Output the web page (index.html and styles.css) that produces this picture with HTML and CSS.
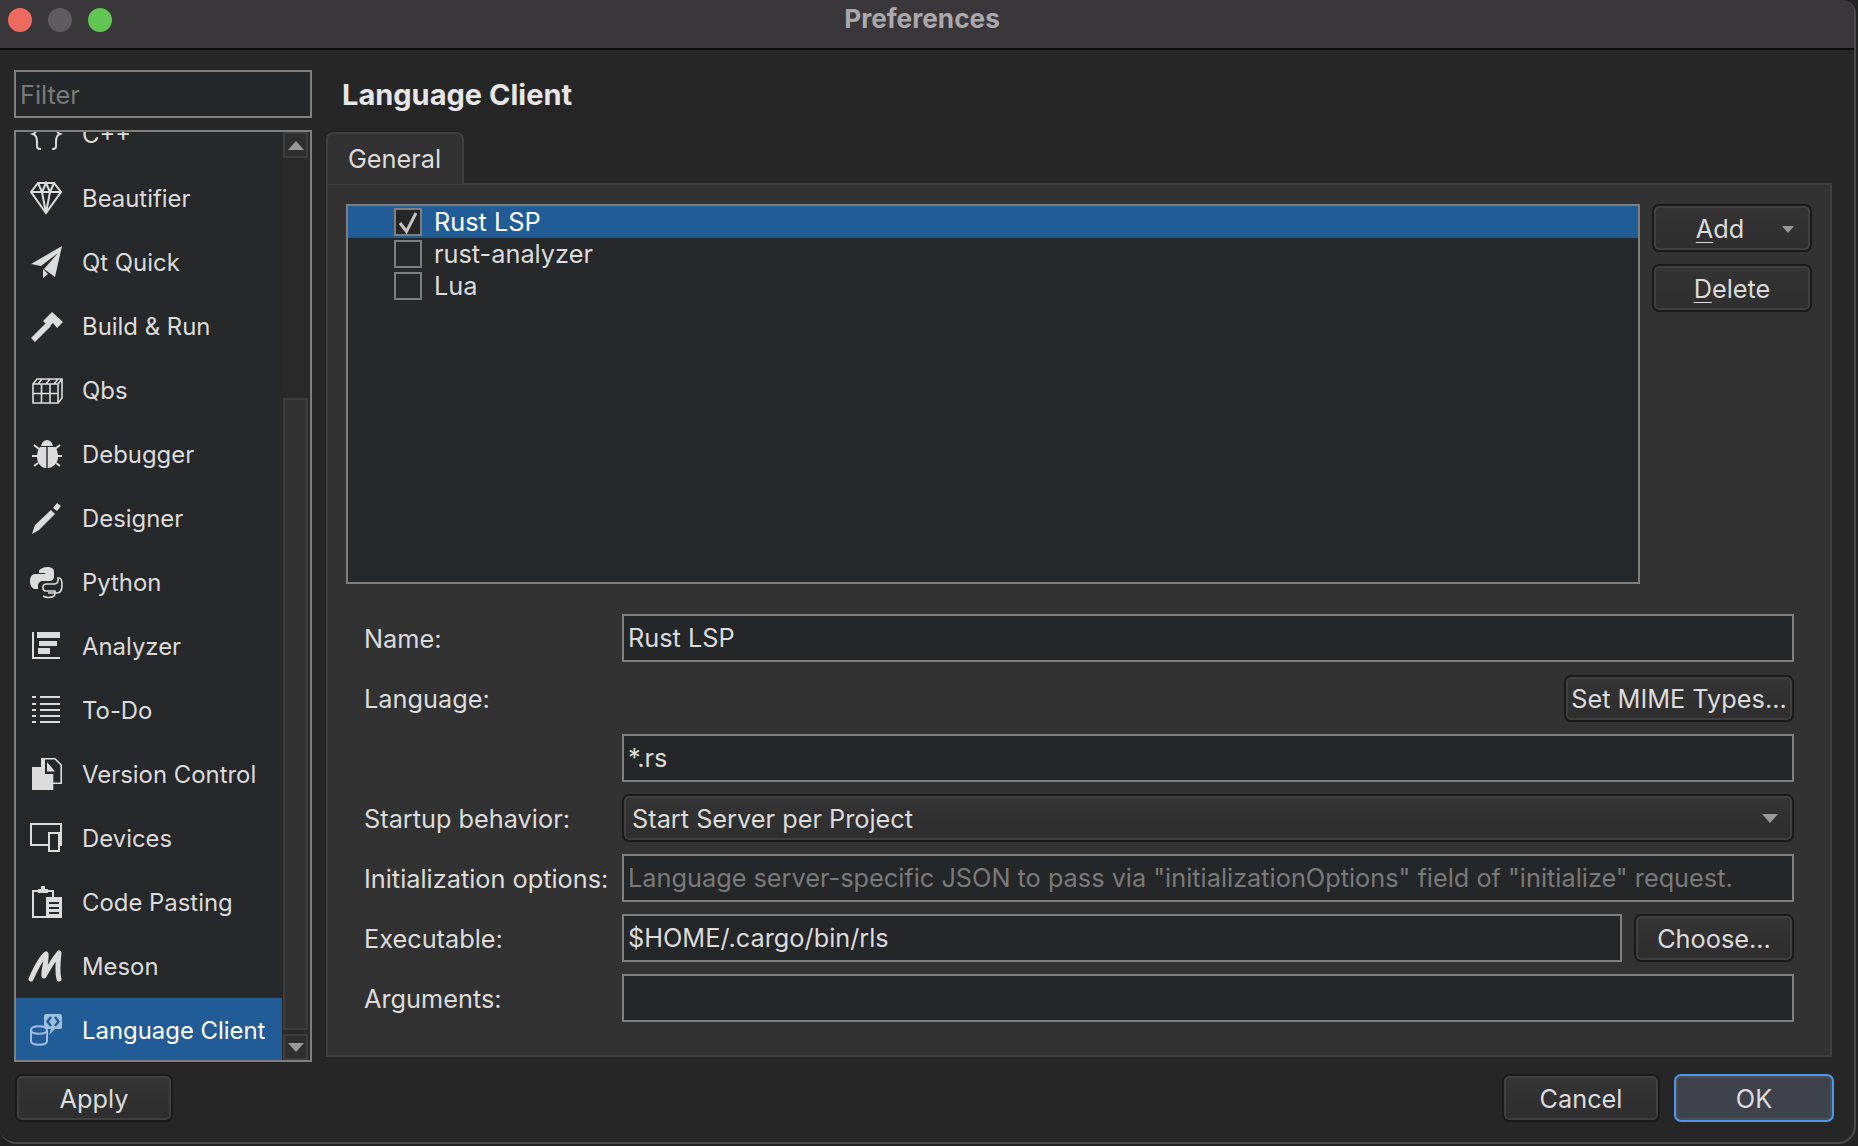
FILE: index.html
```html
<!DOCTYPE html>
<html lang="en">
<head>
<meta charset="utf-8">
<title>Preferences</title>
<link rel="stylesheet" href="styles.css">
</head>
<body>
<div class="window">
  <header class="titlebar">
    <div class="lights"><span class="light red"></span><span class="light grey"></span><span class="light green"></span></div>
    <div class="win-title">Preferences</div>
    <div></div>
  </header>
  <div class="content">
    <aside class="sidebar">
      <div class="field filter"><span class="placeholder">Filter</span></div>
      <div class="cat-box">
        <div class="cat-list">
          <div class="cat"><svg class="ico" viewBox="0 0 32 32"><path class="ln" d="M11 0C6 0 7 3 7 8c0 4-1 7-4 8 3 1 4 4 4 8 0 5-1 7 4 7M22 0c5 0 4 3 4 8 0 4 1 7 4 8-3 1-4 4-4 8 0 5 1 7-4 7"/></svg><span>C++</span></div>
          <div class="cat"><svg class="ico" viewBox="0 0 32 32"><path class="ln" d="M8 1h16l7 9-15 21L1 10zM1 10h30M8 1l4 9 4 21 4-21 4-9M12 10l4-9 4 9"/></svg><span>Beautifier</span></div>
          <div class="cat"><svg class="ico" viewBox="0 0 32 32"><path class="fl" d="M32 0 1 18l10 2 17-13-14 16 11 8zM13 23v9l5-4z"/></svg><span>Qt Quick</span></div>
          <div class="cat"><svg class="ico" viewBox="0 0 32 32"><path class="fl" d="M1 28 17 12l4 4L5 32zM13 11l9-9 11 10-6 6-4-5-4 4z"/></svg><span>Build &amp; Run</span></div>
          <div class="cat"><svg class="ico" viewBox="0 0 32 32"><path class="ln thin" d="M3 10h25v19H3zM3 10l4-5h25v19l-4 5M3 19.500h25M11.500 10v19M20 10v19M12 5l-4 5M20 5l-4 5M28 5l-4 5M28 10l4-5"/></svg><span>Qbs</span></div>
          <div class="cat"><svg class="ico" viewBox="0 0 32 32"><path class="fl" d="M11 8c1-4 3-6 6-6s5 2 6 6zM16.300 9v21C11 30 7 25 7 19c0-4 1-8 3-10zM17.700 9v21C23 30 28 25 28 19c0-4-1-8-3-10z"/><path class="ln" d="M9 11 4 7M25 11l5-4M7 18H2M27 18h5M8 25l-4 3M26 25l4 3"/></svg><span>Debugger</span></div>
          <div class="cat"><svg class="ico" viewBox="0 0 32 32"><path class="fl" d="M2 32l3-9L21 8l4 4L9 28zM23 6l4-5 4 3-4 5z"/></svg><span>Designer</span></div>
          <div class="cat"><svg class="ico" viewBox="0 0 32 32"><path class="fl" d="M11 3c2-2 9-3 12 0 1 1 1 2 1 3v5c0 2-2 4-4 4h-7c-3 0-5 2-5 5v3H5c-3 0-5-4-5-8s2-7 5-7h10v-1H9V5c0-1 1-2 2-2z"/><path class="ln thin" d="M13 30c3 2 8 2 11 0 1-1 1-2 1-3v-2h-9c-2 0-3-1-3-3v-1c0-2 2-3 4-3h7c3 0 4-2 4-4v-2h1c2 0 3 3 3 7 0 5-2 8-5 8h-9"/></svg><span>Python</span></div>
          <div class="cat"><svg class="ico" viewBox="0 0 32 32"><path class="fl" d="M2 2h2v25h26v2H2zM7 2h23v6H7zM9 11h18v5H9zM8 18h12v6H8z"/></svg><span>Analyzer</span></div>
          <div class="cat"><svg class="ico" viewBox="0 0 32 32"><path class="fl" d="M2 2h4v2H2zM10 2h20v2H10zM2 9h4v2H2zM10 9h20v2H10zM2 15h4v2H2zM10 15h20v2H10zM2 21h4v2H2zM10 21h20v2H10zM2 27h4v2H2zM10 27h20v2H10z"/></svg><span>To-Do</span></div>
          <div class="cat"><svg class="ico" viewBox="0 0 32 32"><path class="ln thin" d="M11 .8h14L31.200 7v18.200H23"/><path class="fl" d="M2 9h9V0h4v16h8.300v16H2z"/><path class="fl" d="M17 4l8 9.500h-8z"/></svg><span>Version Control</span></div>
          <div class="cat"><svg class="ico" viewBox="0 0 32 32"><path class="ln" d="M18 23H1V2h30v21h-3"/><path class="ln dark" d="M19 11h10v18H19z"/></svg><span>Devices</span></div>
          <div class="cat"><svg class="ico" viewBox="0 0 32 32"><path class="ln" d="M16 31H3V5h20v6"/><path class="fl" d="M8 3h3V0h4v3h3v4H8z"/><path class="fl" d="M16 11h16v21H16z"/><path class="dk" d="M19 16h10v2H19zM19 21h10v2H19zM19 26h10v2H19z"/></svg><span>Code Pasting</span></div>
          <div class="cat"><svg class="ico" viewBox="0 0 32 32"><path class="ln heavy" d="M1 29C5 20 11 8 16 4c1 7-3 17-2 22C18 19 24 9 29 3c-1 8-2 18 0 26"/></svg><span>Meson</span></div>
          <div class="cat selected"><svg class="ico" viewBox="0 0 32 32"><path class="ln blue" d="M1 16c0-5 16-5 16 0v11c0 5-16 5-16 0zM1 16c0 5 16 5 16 0"/><path class="fl blue-fill" d="M14 2q0-2 2-2h14q2 0 2 2v11q0 2-2 2h-5l-6 6 2-6h-5q-2 0-2-2z"/><path class="ln sel" d="M21 3l-3.500 4.500 3.500 4.500M25 3l3.500 4.500-3.500 4.500"/></svg><span>Language Client</span></div>
        </div>
        <div class="scrollbar">
          <div class="sb-btn"><span class="arrow up"></span></div>
          <div class="sb-track"><div class="sb-thumb"></div></div>
          <div class="sb-btn"><span class="arrow down"></span></div>
        </div>
      </div>
      <button class="btn apply">Apply</button>
    </aside>
    <main class="main">
      <h1 class="heading">Language Client</h1>
      <div class="tabbar"><div class="tab">General</div></div>
      <section class="pane">
        <div class="servers">
          <div class="server-list">
            <div class="server selected"><span class="check"><svg viewBox="0 0 24 24"><path d="M4 13l6.500 8.500L20 3" /></svg></span><span>Rust LSP</span></div>
            <div class="server"><span class="check"></span><span>rust-analyzer</span></div>
            <div class="server"><span class="check"></span><span>Lua</span></div>
          </div>
          <div class="server-actions">
            <button class="btn add"><span class="add-label"><u>A</u>dd</span><span class="arrow down small"></span></button>
            <button class="btn"><span><u>D</u>elete</span></button>
          </div>
        </div>
        <div class="form">
          <div class="label">Name:</div>
          <div class="field">Rust LSP</div>
          <div class="label">Language:</div>
          <div class="end"><button class="btn mime">Set MIME Types...</button></div>
          <div></div>
          <div class="field">*.rs</div>
          <div class="label">Startup behavior:</div>
          <div class="btn combo"><span>Start Server per Project</span><span class="arrow down"></span></div>
          <div class="label">Initialization options:</div>
          <div class="field placeholder">Language server-specific JSON to pass via "initializationOptions" field of "initialize" request.</div>
          <div class="label">Executable:</div>
          <div class="exec"><div class="field grow">$HOME/.cargo/bin/rls</div><button class="btn choose">Choose...</button></div>
          <div class="label">Arguments:</div>
          <div class="field"></div>
        </div>
      </section>
      <footer class="footer">
        <button class="btn cancel">Cancel</button>
        <button class="btn ok">OK</button>
      </footer>
    </main>
  </div>
</div>
</body>
</html>
```

FILE: styles.css
```css
* { box-sizing: border-box; }
html, body { margin: 0; padding: 0; }
body {
  width: 1858px;
  height: 1146px;
  overflow: hidden;
  background: #232323;
  font-family: Inter, "Liberation Sans", sans-serif;
  font-size: 25.300px;
  color: #dcdcdc;
}
.window {
  width: 1856px;
  height: 1144px;
  background: #262626;
  border-right: 2px solid #4a4a4a;
  border-bottom: 2px solid #4a4a4a;
  border-radius: 0 14px 18px 16px;
  overflow: hidden;
  display: flex;
  flex-direction: column;
}
.titlebar {
  flex: none;
  height: 50px;
  background: #3a373a;
  border-bottom: 2px solid #0c0c0c;
  display: grid;
  grid-template-columns: 1fr auto 1fr;
  align-items: center;
  padding: 0 18px 0 8px;
}
.lights { display: flex; gap: 16px; padding-bottom: 8px; }
.light { width: 24px; height: 24px; border-radius: 50%; }
.red { background: #ee6a5f; }
.grey { background: #5e5c5f; }
.green { background: #62c554; }
.win-title { font-weight: 700; color: #aaa8ab; font-size: 26.200px; line-height: 38px; padding-bottom: 10px; }

.content { flex: 1; display: flex; gap: 14px; padding: 20px 0 0 14px; min-height: 0; }
.sidebar { flex: none; width: 298px; display: flex; flex-direction: column; }
.field {
  height: 48px;
  border: 2px solid #7f7f7f;
  background: #252628;
  padding: 0 4px;
  line-height: 44px;
  white-space: nowrap;
  overflow: hidden;
}
.filter { line-height: 46px; }
.placeholder { color: #7a7a7a; }
.cat-box {
  height: 932px;
  margin-top: 12px;
  border: 2px solid #7f7f7f;
  background: #27282a;
  display: flex;
  overflow: hidden;
}
.cat-list { flex: none; width: 266px; margin-top: -30px; font-size: 23.900px; }
.cat { height: 64px; display: flex; align-items: center; gap: 20px; padding-left: 14px; }
.cat.selected { background: #225c97; color: #fff; }
.ico { flex: none; width: 32px; height: 32px; overflow: visible; }
.ln { fill: none; stroke: #dcdcdc; stroke-width: 2; }
.ln.thin { stroke-width: 1.6; }
.ln.heavy { stroke-width: 5; stroke-linecap: round; stroke-linejoin: round; }
.ln.dark { fill: #27282a; }
.ln.blue { stroke: #9dbfe0; }
.ln.sel { stroke: #225c97; stroke-width: 2.4; }
.fl { fill: #dcdcdc; }
.dk { fill: #27282a; }
.blue-fill { fill: #9dbfe0; }

.scrollbar {
  flex: none;
  width: 28px;
  background: #29292a;
  display: flex;
  flex-direction: column;
  gap: 4px;
  padding: 0 2px 0 1px;
}
.sb-btn {
  flex: none;
  height: 26px;
  background: #2e2e2e;
  border: 2px solid #3e3e3e;
  display: flex;
  align-items: center;
  justify-content: center;
}
.sb-track { flex: 1; display: flex; flex-direction: column; justify-content: flex-end; }
.sb-thumb { height: 632px; background: #323232; border: 2px solid #3d3d3d; }
.arrow { display: block; flex: none; width: 0; height: 0; border-left: 8px solid transparent; border-right: 8px solid transparent; }
.arrow.up { border-bottom: 9px solid #999; }
.arrow.down { border-top: 9px solid #999; }
.arrow.small { border-left-width: 6.500px; border-right-width: 6.500px; border-top-width: 7px; }

.btn {
  font: inherit;
  color: #dcdcdc;
  height: 48px;
  padding: 0;
  border: 2px solid #1a1a1a;
  border-radius: 7px;
  background: linear-gradient(#343434, #2e2e2e);
  box-shadow: inset 0 0 0 2px #404040;
  display: flex;
  align-items: center;
  justify-content: center;
}
.apply { flex: none; width: 158px; height: 48px; margin: 12px 0 0 1px; }

.main { flex: none; width: 1508px; display: flex; flex-direction: column; }
.heading { margin: 0 0 12px; height: 50px; padding-left: 16px; font-size: 29px; font-weight: 700; line-height: 50px; color: #e6e6e6; }
.tabbar { flex: none; height: 51px; display: flex; position: relative; z-index: 1; }
.tab {
  width: 138px;
  height: 52px;
  background: #323232;
  border: 2px solid #3f3f3f;
  border-bottom: none;
  border-radius: 7px 7px 0 0;
  box-shadow: 0 -1px 0 #1e1e1e;
  padding-left: 20px;
  line-height: 50px;
}
.pane {
  flex: none;
  width: 1506px;
  height: 874px;
  background: #323232;
  border: 2px solid #3f3f3f;
  padding: 19px 18px 0 18px;
}
.servers { display: flex; gap: 12px; height: 381px; }
.server-list {
  flex: none;
  width: 1294px;
  height: 380px;
  border: 2px solid #7f7f7f;
  background: #27282a;
}
.server { height: 32px; display: flex; align-items: center; gap: 12px; padding-left: 46px; line-height: 32px; }
.server.selected { background: #225c97; color: #fff; }
.check { flex: none; width: 28px; height: 28px; border: 2px solid #7f7f7f; }
.server.selected .check { background: #262626; }
.check svg { display: block; width: 24px; height: 24px; }
.check path { fill: none; stroke: #c4c4c4; stroke-width: 3; }
.server-actions { flex: none; width: 160px; display: flex; flex-direction: column; gap: 12px; }
.add { position: relative; padding-right: 24px; }
.add .arrow { position: absolute; right: 16px; top: 20px; }
u { text-underline-offset: 4px; text-decoration-thickness: 1px; }

.form {
  margin: 29px 0 0 18px;
  width: 1430px;
  display: grid;
  grid-template-columns: 258px 1172px;
  grid-auto-rows: 48px;
  row-gap: 12px;
  align-items: center;
}
.label { white-space: nowrap; }
.end { display: flex; justify-content: flex-end; }
.mime { width: 230px; height: 47px; }
.combo { justify-content: space-between; padding: 0 14px 0 8px; }
.exec { display: flex; gap: 12px; }
.grow { flex: 1; }
.choose { flex: none; width: 160px; }

.footer { flex: none; margin-top: 17px; display: flex; justify-content: flex-end; align-items: center; gap: 14px; }
.cancel { width: 158px; height: 48px; }
.ok {
  width: 160px;
  height: 48px;
  border-color: #4f97e8;
  background: #3e424b;
  box-shadow: inset 0 0 0 2px #4a4e57;
}
```
